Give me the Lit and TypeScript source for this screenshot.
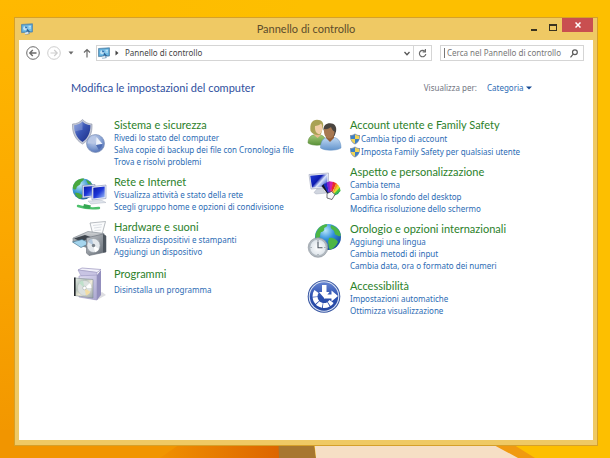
import { LitElement, html, svg, css, nothing } from "lit";
import type { TemplateResult } from "lit";

interface Task {
  text: string;
  shield?: boolean;
}
interface Category {
  title: string;
  icon: TemplateResult;
  tasks: Task[];
  lone?: boolean;
}

const iconSecurity = svg`
  <defs>
    <linearGradient id="s1" x1="0" y1="0" x2="1" y2="1">
      <stop offset="0" stop-color="#7f98d8"/><stop offset=".45" stop-color="#3a55b4"/><stop offset="1" stop-color="#1a2c84"/>
    </linearGradient>
    <radialGradient id="s2" cx=".4" cy=".3" r=".8">
      <stop offset="0" stop-color="#d3ddf2"/><stop offset=".6" stop-color="#7f9bd0"/><stop offset="1" stop-color="#4766ad"/>
    </radialGradient>
  </defs>
  <path d="M1.500 6C6 6 9 4 11.500 1.500C14 4 17 6 21 6C21.500 15 18.500 22 11.500 26C4.500 22 1 15 1.500 6Z" fill="#c3c8d6" stroke="#8a90a6" stroke-width=".6"/>
  <path d="M3.200 7.300C7 7 9.500 5.500 11.500 3.500C13.500 5.500 16 7 19.400 7.300C19.500 14.500 17 20.500 11.500 24C6 20.500 3 14.500 3.200 7.300Z" fill="url(#s1)"/>
  <path d="M3.200 7.300C7 7 9.500 5.500 11.500 3.500V12C8 12 5 13 3.800 14C3.300 12 3.100 10 3.200 7.300Z" fill="#aebde8" opacity=".35"/>
  <circle cx="24.500" cy="25.500" r="9" fill="url(#s2)" stroke="#7e90b8" stroke-width=".7"/>
  <path d="M16.500 25.500A8 8 0 0 1 24 17.800L24.500 25.500Z" fill="#b8c7e6"/>
  <path d="M25.500 19L31.500 26L25 27Z" fill="#edf2fb"/>
  <path d="M25 27L31.500 26A8 8 0 0 1 28 32Z" fill="#4e6db4"/>`;

const iconNetwork = svg`
  <defs>
    <radialGradient id="n1" cx=".35" cy=".3" r=".8">
      <stop offset="0" stop-color="#c4eafa"/><stop offset=".5" stop-color="#3b98d4"/><stop offset="1" stop-color="#125089"/>
    </radialGradient>
    <linearGradient id="n2" x1="0" y1="0" x2="1" y2="1">
      <stop offset="0" stop-color="#0a19a0"/><stop offset=".5" stop-color="#1d36d8"/><stop offset="1" stop-color="#a5c6f8"/>
    </linearGradient>
  </defs>
  <circle cx="12" cy="14" r="10.500" fill="url(#n1)"/>
  <path d="M3 9C5 5 9 3.500 13 3.600C13 6 10 6 9.500 8.500C9 11 6 10 5.500 13C5 15 3 15 1.800 13C1.900 11.500 2.300 10 3 9ZM15 5C18 6 20 7.500 21 10L17 9ZM4 18C7 17 9 19 11 20C12 22 10 23.500 9 24C6.500 23 4.500 21 4 18Z" fill="#49a83e"/>
  <path d="M11.500 10.500L24 9.500V21.500L11.500 23Z" fill="#e3e7f2" stroke="#7c88b0" stroke-width=".6"/>
  <path d="M12.800 11.800L23 11V20.400L12.800 21.600Z" fill="url(#n2)"/>
  <path d="M21 11.500L35 10V23.500L21 25Z" fill="#eef1f8" stroke="#8490b8" stroke-width=".6"/>
  <path d="M22.300 12.800L33.700 11.500V22.200L22.300 23.500Z" fill="url(#n2)"/>
  <path d="M17 26L31 25.500L35 27.500L20 29Z" fill="#dfe4ec" stroke="#a4acbc" stroke-width=".4"/>
  <path d="M7 31C13 33 20 34 28 33" fill="none" stroke="#4cc06b" stroke-width="2.400" stroke-linecap="round"/>
  <path d="M13 29L20 30.500L18.500 34L12 32.500Z" fill="#35a753"/>`;

const iconHardware = svg`
  <defs>
    <linearGradient id="h1" x1="0" y1="0" x2="1" y2="1">
      <stop offset="0" stop-color="#c4c8cd"/><stop offset="1" stop-color="#5e666f"/>
    </linearGradient>
    <linearGradient id="h2" x1="0" y1="0" x2="0" y2="1">
      <stop offset="0" stop-color="#d0d3d6"/><stop offset="1" stop-color="#747b83"/>
    </linearGradient>
  </defs>
  <path d="M19 3L34.500 1.500L31 14.500L22 15Z" fill="#fafbfc" stroke="#9ba1a8" stroke-width=".7"/>
  <path d="M22 5.500L31 4.500M23 8L30.500 7M23.500 10.500L30 10" stroke="#cdd3da" stroke-width=".7"/>
  <path d="M2 18L17 11.500L33 13.500V21L19 29L2 22Z" fill="url(#h2)" stroke="#777f88" stroke-width=".6"/>
  <path d="M3 18.500L14 15L21 17.500L10 21.500Z" fill="#3e454d"/>
  <path d="M1.500 22L11 19.500L19 23L10 27.500Z" fill="#a5d5ee" stroke="#3f6c84" stroke-width=".6"/>
  <path d="M15.500 18L32 14L35 16V32L18 35.500L15.500 33Z" fill="url(#h1)" stroke="#646c75" stroke-width=".6"/>
  <path d="M32 14L35 16V32L32 32.600Z" fill="#4d555e"/>
  <ellipse cx="22.500" cy="25.500" rx="6.600" ry="7" fill="#e4e8ec" stroke="#8d959e" stroke-width=".6"/>
  <path d="M22.500 25.500L17 22A6.500 7 0 0 1 21 18.700Z" fill="#b4c8dd"/>
  <path d="M22.500 25.500L28 29A6.500 7 0 0 1 24 32.300Z" fill="#fff"/>
  <circle cx="22.500" cy="25.500" r="1.700" fill="#79828b"/>`;

const iconPrograms = svg`
  <defs>
    <linearGradient id="p1" x1="0" y1="0" x2="1" y2="1">
      <stop offset="0" stop-color="#e3e0f4"/><stop offset="1" stop-color="#a9a6cf"/>
    </linearGradient>
    <linearGradient id="p2" x1="0" y1="0" x2="1" y2="1">
      <stop offset="0" stop-color="#e8eee9"/><stop offset=".35" stop-color="#b3c0b8"/><stop offset=".55" stop-color="#f2edda"/><stop offset="1" stop-color="#95a1aa"/>
    </linearGradient>
  </defs>
  <path d="M20 32L31 25L35 28L26 33Z" fill="#d0d0d6" opacity=".7"/>
  <path d="M7 3L11 1L30 2.500L26 5.500Z" fill="#f2f1fa" stroke="#9994bd" stroke-width=".7"/>
  <path d="M7 3L10 9L26 10V5.500Z" fill="#c8c4e3" stroke="#9994bd" stroke-width=".5"/>
  <path d="M8 9L26 8V33L8 30Z" fill="url(#p1)" stroke="#9a96c0" stroke-width=".6"/>
  <path d="M26 8L30 3V28L26 33Z" fill="#938fbd"/>
  <path d="M3.500 11L22 12.500V31L3.500 28.500Z" fill="url(#p2)" stroke="#828d94" stroke-width=".6"/>
  <path d="M3 10.500H4.600V29H3Z" fill="#23272b"/>
  <ellipse cx="13.500" cy="21" rx="7" ry="7.600" fill="#dce1df" stroke="#b5bcba" stroke-width=".5"/>
  <path d="M13.500 21L8 16A7 7.600 0 0 1 12 13.600Z" fill="#bfe0cb"/>
  <path d="M13.500 21L19.500 25A7 7.600 0 0 1 15 28.400Z" fill="#f2dda5"/>
  <path d="M13.500 21L19 16A7 7.600 0 0 1 20.500 21Z" fill="#fff"/>
  <circle cx="13.500" cy="21" r="1.800" fill="#fff" stroke="#9ea6a6" stroke-width=".5"/>`;

const iconAccounts = svg`
  <defs>
    <linearGradient id="a1" x1="0" y1="0" x2="0" y2="1">
      <stop offset="0" stop-color="#a5ca7a"/><stop offset="1" stop-color="#5a9238"/>
    </linearGradient>
    <linearGradient id="a2" x1="0" y1="0" x2="0" y2="1">
      <stop offset="0" stop-color="#c3dbf5"/><stop offset="1" stop-color="#6394cc"/>
    </linearGradient>
  </defs>
  <path d="M1 25C1 19 4.500 16.500 10 16.500C15.500 16.500 19 19 19 25C15 28 5 28 1 25Z" fill="url(#a1)" stroke="#5a8a3c" stroke-width=".5"/>
  <path d="M7 14H14V17L10.500 20L7 17Z" fill="#e5b88c"/>
  <path d="M3.500 13C2.500 6 5 1.800 10 1.800C15 1.800 17 5 16 9L14 16C11 18 6 17 3.500 13Z" fill="#a9a254"/>
  <path d="M8 8C10 8 13 7 14 5.500C16 8 16 13 13 16C10 16.500 7.500 13.500 8 8Z" fill="#f0cda6"/>
  <path d="M13.500 30C13.500 22 17 19 23.500 19C30 19 34 22 34 30C29 33 18 33 13.500 30Z" fill="url(#a2)" stroke="#5f8cc0" stroke-width=".5"/>
  <path d="M19 17H27V20L23 24L19 20Z" fill="#945f38"/>
  <path d="M16.500 12C16 8 19 5.300 23 5.300C27.500 5.300 30 8.500 29 13.500L27.500 18L20 16Z" fill="#4a4540"/>
  <path d="M17 11C20 11.500 22.500 10.500 24 9C25 11.500 26 13 27.500 13.500C27.500 18 25 20.500 22 20.500C18.500 20.500 16.500 16 17 11Z" fill="#a87851"/>`;

const iconAppearance = svg`
  <defs>
    <linearGradient id="d1" x1="0" y1="0" x2="1" y2=".7">
      <stop offset="0" stop-color="#2540d8"/><stop offset=".5" stop-color="#0c1bb0"/><stop offset=".68" stop-color="#dbe6fb"/><stop offset="1" stop-color="#3a5bd0"/>
    </linearGradient>
  </defs>
  <path d="M2 9.500L21.500 8V22.500L4 24Z" fill="#e9ecf4" stroke="#98a0b8" stroke-width=".6"/>
  <path d="M3.200 10.700L20.300 9.300V21.200L5 22.600Z" fill="url(#d1)"/>
  <path d="M10 24L16 23.500L17 26.500L20 28L9 29L7 27.500Z" fill="#d0d5df" stroke="#9aa2b4" stroke-width=".4"/>
  <path d="M23 32L14.500 21L17.500 18.500Z" fill="#161b28"/>
  <path d="M23 32L16.500 19.500L20 17.500Z" fill="#1b2cc4"/>
  <path d="M23 32L19.500 17.500L23 16.300Z" fill="#7a22cf"/>
  <path d="M23 32L22.500 16.300L26.500 17Z" fill="#d420a8"/>
  <path d="M23 32L26 16.800L29.500 18.300Z" fill="#ea2a2a"/>
  <path d="M24 32L29 18L31.500 20.500Z" fill="#f39a1f"/>
  <path d="M24 32L31 20L33.300 23Z" fill="#e7d92c"/>
  <path d="M24 32L32.800 22.500L33.600 26Z" fill="#4cc43c"/>
  <path d="M24 32L33.500 25.500L31 29Z" fill="#1f9c58"/>
  <path d="M20 28.500L24.500 26.500L28 29.500L25 34.500L20 33Z" fill="#f7f7f8" stroke="#3b3b40" stroke-width=".7"/>`;

const iconClock = svg`
  <defs>
    <radialGradient id="c1" cx=".4" cy=".25" r=".85">
      <stop offset="0" stop-color="#b9e6fb"/><stop offset=".4" stop-color="#3391dd"/><stop offset="1" stop-color="#0d3a8c"/>
    </radialGradient>
    <radialGradient id="c2">
      <stop offset="0" stop-color="#fff"/><stop offset="1" stop-color="#dde4ea"/>
    </radialGradient>
  </defs>
  <circle cx="21" cy="15" r="13" fill="url(#c1)"/>
  <path d="M10 9C12 4.500 16 2.200 20 2.200C21 4 19 5 17 6C18 8 16 10 14 10C12.500 12.500 14 14 12 16L9 17C8 14.500 8.400 11 10 9ZM24 3C29 4.500 33 8 33.800 13C32 16 31 13 29 13C27 12 28 9 26 8C24 7 23 5 24 3ZM22 16C26 15 30 18 31 20C29 24 26.500 27 23 27.800C21 25 22 22 21 20Z" fill="#4cb645"/>
  <circle cx="11" cy="25.500" r="9.800" fill="#b3bac1" stroke="#89929a" stroke-width=".6"/>
  <circle cx="11" cy="25.500" r="8.200" fill="url(#c2)" stroke="#9da6ae" stroke-width=".5"/>
  <path d="M11 19.500V25.800H15.500" fill="none" stroke="#4c5660" stroke-width="1.100"/>
  <path d="M11 18V19M11 32V33M3.600 25.500H4.600M17.400 25.500H18.400" stroke="#6e7880" stroke-width=".8"/>`;

const iconAccess = svg`
  <defs>
    <linearGradient id="e1" x1="0" y1="0" x2="0" y2="1">
      <stop offset="0" stop-color="#6483d0"/><stop offset=".5" stop-color="#2c50b0"/><stop offset="1" stop-color="#2446a0"/>
    </linearGradient>
  </defs>
  <circle cx="17" cy="17.500" r="16.300" fill="#3453a0"/>
  <circle cx="17" cy="17.500" r="15.300" fill="#dce5f5"/>
  <circle cx="17" cy="17.500" r="14.200" fill="url(#e1)"/>
  <path d="M9.500 12.500A9 9 0 1 0 24.500 22.500" fill="none" stroke="#fff" stroke-width="5" stroke-dasharray="5.400 .7"/>
  <path d="M15 6H19.500V13H22.500L17.500 19.500L12 13H15Z" fill="#fff"/>
  <path d="M17 15.500H24.500V11.500L31 17L24.500 22.500V19.500H17Z" fill="#fff"/>`;

const uacShield = svg`
  <path d="M6 .5C7.500 1.600 9.200 2 11 2C11.300 6.600 9.500 9.800 6 11.500C2.500 9.800 .7 6.600 1 2C2.800 2 4.500 1.600 6 .5Z" fill="#8a99ad"/>
  <path d="M6 1.600V6H1.900C1.800 5 1.800 4 1.900 2.900C3.500 2.800 4.800 2.400 6 1.600Z" fill="#3c7fc6"/>
  <path d="M6 1.600V6H10.100C10.200 5 10.200 4 10.100 2.900C8.500 2.800 7.200 2.400 6 1.600Z" fill="#f0d455"/>
  <path d="M6 6V10.500C3.600 9.200 2.300 7.700 1.900 6Z" fill="#f0d455"/>
  <path d="M6 6V10.500C8.400 9.200 9.700 7.700 10.100 6Z" fill="#3c7fc6"/>`;

const panelIcon = html`<svg class="panel" viewBox="0 0 12 12" aria-hidden="true">
  <path d="M.5 1.500L11.500 .8V9L.5 9.600Z" fill="#4e9ccc" stroke="#5c88a8" stroke-width=".8"/>
  <path d="M1.500 2.500L10.500 1.900V8L1.500 8.500Z" fill="#74bde6"/>
  <circle cx="4.200" cy="5.200" r="2" fill="#c4e3f5"/><path d="M4.200 5.200V3.200A2 2 0 0 1 6.200 5.200Z" fill="#2a6cae"/>
  <path d="M7.500 3.300H10M7.500 5H10" stroke="#d4edfa" stroke-width=".9"/>
  <path d="M6 5.500L9 8.500L7.500 9.800L9 11L4 11.500L5.500 9Z" fill="#2c6398"/>
  <path d="M3.500 10L7 8.500L8 10.500L4.500 11.600Z" fill="#dae5ec"/>
</svg>`;

const leftColumn: Category[] = [
  {
    title: "Sistema e sicurezza",
    icon: iconSecurity,
    tasks: [
      { text: "Rivedi lo stato del computer" },
      { text: "Salva copie di backup dei file con Cronologia file" },
      { text: "Trova e risolvi problemi" },
    ],
  },
  {
    title: "Rete e Internet",
    icon: iconNetwork,
    tasks: [
      { text: "Visualizza attività e stato della rete" },
      { text: "Scegli gruppo home e opzioni di condivisione" },
    ],
  },
  {
    title: "Hardware e suoni",
    icon: iconHardware,
    tasks: [{ text: "Visualizza dispositivi e stampanti" }, { text: "Aggiungi un dispositivo" }],
  },
  { title: "Programmi", icon: iconPrograms, tasks: [{ text: "Disinstalla un programma" }], lone: true },
];

const rightColumn: Category[] = [
  {
    title: "Account utente e Family Safety",
    icon: iconAccounts,
    tasks: [
      { text: "Cambia tipo di account", shield: true },
      { text: "Imposta Family Safety per qualsiasi utente", shield: true },
    ],
  },
  {
    title: "Aspetto e personalizzazione",
    icon: iconAppearance,
    tasks: [
      { text: "Cambia tema" },
      { text: "Cambia lo sfondo del desktop" },
      { text: "Modifica risoluzione dello schermo" },
    ],
  },
  {
    title: "Orologio e opzioni internazionali",
    icon: iconClock,
    tasks: [
      { text: "Aggiungi una lingua" },
      { text: "Cambia metodi di input" },
      { text: "Cambia data, ora o formato dei numeri" },
    ],
  },
  {
    title: "Accessibilità",
    icon: iconAccess,
    tasks: [{ text: "Impostazioni automatiche" }, { text: "Ottimizza visualizzazione" }],
  },
];

class AppRoot extends LitElement {
  static styles = css`
    :host {
      display: grid;
      min-height: 100vh;
      font-family: "Noto Sans", "Open Sans", sans-serif;
      font-size: 8px;
      line-height: 12px;
      color: #444;
    }
    * {
      box-sizing: border-box;
    }
    button, input, select {
      font: inherit;
      color: inherit;
      margin: 0;
      padding: 0;
      border: 0;
      background: none;
      border-radius: 0;
      outline: 0;
    }
    button {
      display: grid;
      place-items: center;
    }
    svg {
      display: block;
      flex: none;
    }
    a {
      color: #2c6cb4;
      text-decoration: none;
    }
    .wallpaper, .window {
      grid-area: 1 / 1;
    }
    .wallpaper {
      width: 100%;
      height: 100%;
      min-height: 0;
      contain: size;
    }
    .window {
      margin: 17px 12px 12px 14px;
      padding: 0 4px 5px;
      border: 1px solid #d5a02a;
      background: #efc964;
      display: flex;
      flex-direction: column;
    }
    .titlebar {
      display: grid;
      grid-template-columns: 1fr auto 1fr;
      height: 22px;
    }
    .titlebar .panel {
      margin: 5px 2px;
    }
    .panel {
      width: 12px;
      height: 12px;
    }
    h1, h2, h3 {
      margin: 0;
      font-family: Lato, "Open Sans", sans-serif;
      font-weight: 400;
      font-size: 11px;
      line-height: 14px;
    }
    h1 {
      color: #5c4c2c;
      line-height: 22px;
    }
    .controls {
      display: flex;
      justify-content: flex-end;
    }
    .controls button {
      width: 19px;
      height: 18px;
    }
    .controls .close {
      width: 31px;
      height: 14px;
      background: #c94f50;
    }
    .client {
      flex: 1;
      background: #fff;
    }
    .nav {
      display: flex;
      align-items: center;
      height: 16px;
      margin: 5px 9px 0 7px;
    }
    .history {
      display: flex;
      align-items: center;
      gap: 7px;
      margin-right: 3px;
    }
    .address {
      flex: 1;
      display: flex;
      align-items: center;
      height: 16px;
      border: 1px solid #d5d5d5;
      padding-left: 1px;
    }
    .address .arrow {
      margin: 0 6px 0 5px;
    }
    .address .crumb {
      flex: 1;
      color: #444;
    }
    .address .drop {
      width: 13px;
    }
    .address .refresh {
      width: 18px;
      height: 14px;
      border-left: 1px solid #d5d5d5;
    }
    .search {
      width: 144px;
      height: 16px;
      margin-left: 8px;
      border: 1px solid #d5d5d5;
      display: flex;
      align-items: center;
      padding: 0 5px 0 3px;
    }
    .search .cursor {
      width: 1px;
      height: 10px;
      background: #777;
      margin-right: 2px;
    }
    .search input {
      flex: 1;
      min-width: 0;
      height: 12px;
    }
    .search input::placeholder {
      color: #777;
      opacity: 1;
    }
    .heading {
      display: flex;
      align-items: center;
      margin: 20px 61px 23px 52px;
    }
    h2 {
      flex: 1;
      color: #2f509e;
    }
    .view {
      display: flex;
      align-items: center;
      color: #71757f;
    }
    .view select {
      appearance: none;
      color: #2c6cb4;
      margin-left: 10px;
      width: 39px;
      height: 14px;
    }
    .categories {
      display: grid;
      grid-template-columns: 236px 1fr;
      margin-left: 52px;
    }
    .column {
      display: flex;
      flex-direction: column;
      gap: 7px;
    }
    .category {
      display: flex;
      gap: 7px;
      min-height: 38px;
    }
    .lone {
      margin-top: 2px;
    }
    .lone .tasks {
      margin-top: 3px;
    }
    .icon {
      width: 36px;
      height: 38px;
      margin-bottom: -4px;
    }
    h3 a {
      color: #2b812a;
    }
    .tasks {
      margin: 0;
      padding: 0;
      list-style: none;
      white-space: nowrap;
    }
    .task {
      display: flex;
      align-items: center;
    }
    .shielded {
      height: 13px;
      gap: 1px;
    }
  `;

  private renderCategory(c: Category) {
    return html`<section class="category ${c.lone ? "lone" : ""}">
      <svg class="icon" viewBox="0 0 36 38" aria-hidden="true">${c.icon}</svg>
      <div>
        <h3><a href="#">${c.title}</a></h3>
        <ul class="tasks">
          ${c.tasks.map(
            (t) => html`<li class="task ${t.shield ? "shielded" : ""}">
              ${t.shield ? html`<svg width="10" height="12" viewBox="1 0 10 12" aria-hidden="true">${uacShield}</svg>` : nothing}
              <a href="#">${t.text}</a>
            </li>`
          )}
        </ul>
      </div>
    </section>`;
  }

  render() {
    return html`
      <svg class="wallpaper" viewBox="0 0 610 458" preserveAspectRatio="none" aria-hidden="true">
        <defs>
          <linearGradient id="left" x1="0" y1="0" x2="0" y2="1">
            <stop offset="0" stop-color="#ffb900"/><stop offset=".5" stop-color="#fba800"/><stop offset="1" stop-color="#f19500"/>
          </linearGradient>
          <linearGradient id="top" x1="0" y1="0" x2="1" y2="0">
            <stop offset="0" stop-color="#ffb900"/><stop offset=".5" stop-color="#fdbf00"/>
          </linearGradient>
          <linearGradient id="fold" x1="0" y1="0" x2="1" y2="0">
            <stop offset="0" stop-color="#f09000"/><stop offset="1" stop-color="#dc6400"/>
          </linearGradient>
        </defs>
        <rect width="610" height="458" fill="url(#top)"/>
        <path d="M0 0H60V458H0Z" fill="url(#left)"/>
        <path d="M0 430H300V458H0Z" fill="#f19500"/>
        <path d="M200 430H282V458H160Z" fill="url(#fold)"/>
        <path d="M278 430H312L316 458H279Z" fill="#a7772f"/>
        <path d="M313 430H470L530 458H316Z" fill="#f6dfc5"/>
        <path d="M466 430L518 458H535L490 430Z" fill="#f09a10"/>
      </svg>
      <main class="window">
        <header class="titlebar">
          ${panelIcon}
          <h1>Pannello di controllo</h1>
          <div class="controls">
            <button aria-label="Riduci a icona"><svg width="6" height="8"><path d="M0 6H6V8H0Z" fill="#3a3320"/></svg></button>
            <button aria-label="Ingrandisci"><svg width="8" height="7"><path d="M0 0H8V7H0ZM1 2V6H7V2Z" fill="#3a3320" fill-rule="evenodd"/></svg></button>
            <button class="close" aria-label="Chiudi"><svg width="6" height="6"><path d="M.5 .5L5.500 5.500M5.500 .5L.5 5.500" stroke="#fff" stroke-width="1.500"/></svg></button>
          </div>
        </header>
        <div class="client">
          <nav class="nav">
            <div class="history">
              <button aria-label="Indietro"><svg width="14" height="14" fill="none" stroke="#6b6b6b"><circle cx="7" cy="7" r="6.300"/><path d="M10.500 7H4M6.800 4L3.800 7L6.800 10" stroke-width="1.400"/></svg></button>
              <button aria-label="Avanti"><svg width="14" height="14" fill="none" stroke="#cdcdcd"><circle cx="7" cy="7" r="6.300"/><path d="M3.500 7H10M7.200 4L10.200 7L7.200 10" stroke-width="1.200"/></svg></button>
              <button aria-label="Percorsi recenti"><svg width="6" height="4"><path d="M.5 .5H5.500L3 3.500Z" fill="#6a6a6a"/></svg></button>
              <button aria-label="Su"><svg width="12" height="10" fill="none" stroke="#6a6a6a" stroke-width="1.200"><path d="M6 9.500V1.500M3 4.500L6 1.500L9 4.500"/></svg></button>
            </div>
            <div class="address">
              ${panelIcon}
              <svg class="arrow" width="4" height="6"><path d="M.5 .5L3.500 3L.5 5.500Z" fill="#444"/></svg>
              <a class="crumb" href="#">Pannello di controllo</a>
              <button class="drop" aria-label="Cronologia indirizzi"><svg width="6" height="5" fill="none" stroke="#555" stroke-width="1.300"><path d="M.5 1L3 3.700L5.500 1"/></svg></button>
              <button class="refresh" aria-label="Aggiorna"><svg width="9" height="9" fill="none" stroke="#6a6a6a" stroke-width="1.200"><path d="M6.800 2.200A3.200 3.200 0 1 0 7.800 5"/><path d="M4.600 2.800H7.400V0"/></svg></button>
            </div>
            <label class="search">
              <span class="cursor"></span>
              <input type="text" aria-label="Cerca" placeholder="Cerca nel Pannello di controllo" />
              <svg width="8" height="9" fill="none" stroke="#5a5a5a" stroke-width="1.200"><circle cx="4.900" cy="3.300" r="2.400"/><path d="M3.200 5.200L.5 8.300"/></svg>
            </label>
          </nav>
          <div class="heading">
            <h2>Modifica le impostazioni del computer</h2>
            <label class="view">Visualizza per:
              <select><option>Categoria</option></select>
              <svg width="6" height="4" aria-hidden="true"><path d="M0 .5H6L3 3.500Z" fill="#164a94"/></svg>
            </label>
          </div>
          <div class="categories">
            <div class="column">${leftColumn.map((c) => this.renderCategory(c))}</div>
            <div class="column">${rightColumn.map((c) => this.renderCategory(c))}</div>
          </div>
        </div>
      </main>
    `;
  }
}
customElements.define("app-root", AppRoot);
